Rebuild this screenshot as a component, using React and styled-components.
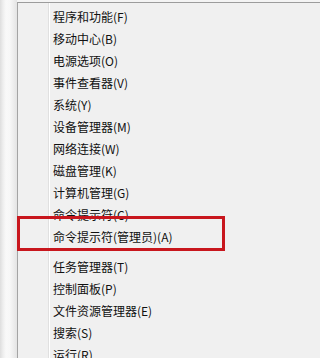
import React from "react";
import styled, { createGlobalStyle } from "styled-components";

const Global = createGlobalStyle`
  html, body { margin: 0; padding: 0; background: #f0f0f0; }
  body { min-width: 227px; height: 358px; overflow: hidden; }
`;

const Screen = styled.div`
  display: flex;
  width: 100%;
  min-width: 227px;
  height: 358px;
  overflow: hidden;
  background: #f4f4f4;
`;

const Backdrop = styled.div`
  flex: 0 0 17px;
  background: linear-gradient(
    to right,
    #dedede 0px,
    #eeeeee 3px,
    #f9f9f9 6px,
    #f7f7f7 10px,
    #ececec 14px,
    #e4e4e4 17px
  );
`;

const Menu = styled.div`
  flex: 1;
  margin-top: 2px;
  border-top: 1px solid #9c9c9c;
  border-left: 1px solid #a4a4a4;
  padding-top: 2px;
  background: linear-gradient(
    to right,
    #f0f0f0 30px,
    #e0e0e0 30px,
    #e0e0e0 31px,
    #ffffff 31px,
    #ffffff 32px,
    #f0f0f0 32px
  );
  display: flex;
  flex-direction: column;
`;

const Item = styled.div`
  position: relative;
  flex: 0 0 22px;
  height: 22px;
  display: flex;
  align-items: center;
  padding-left: 35px;
  font-family: "Noto Sans CJK SC", "Noto Sans", sans-serif;
  font-size: 12px;
  color: #111111;
  white-space: nowrap;
`;

const Separator = styled.div`
  flex: 0 0 8px;
`;

const Highlight = styled.div`
  position: absolute;
  box-sizing: border-box;
  left: -1px;
  width: 208px;
  top: -9px;
  bottom: -4px;
  border: 3px solid #c8161d;
  pointer-events: none;
`;

const groups = [
  [
    "程序和功能(F)",
    "移动中心(B)",
    "电源选项(O)",
    "事件查看器(V)",
    "系统(Y)",
    "设备管理器(M)",
    "网络连接(W)",
    "磁盘管理(K)",
    "计算机管理(G)",
    "命令提示符(C)",
    "命令提示符(管理员)(A)",
  ],
  ["任务管理器(T)", "控制面板(P)", "文件资源管理器(E)", "搜索(S)", "运行(R)"],
];

export default function App() {
  return (
    <>
      <Global />
      <Screen>
        <Backdrop />
        <Menu>
          {groups.map((g, gi) => (
            <React.Fragment key={gi}>
              {gi > 0 && <Separator />}
              {g.map((label) => (
                <Item key={label}>
                  {label}
                  {label === "命令提示符(管理员)(A)" && <Highlight />}
                </Item>
              ))}
            </React.Fragment>
          ))}
        </Menu>
      </Screen>
    </>
  );
}
